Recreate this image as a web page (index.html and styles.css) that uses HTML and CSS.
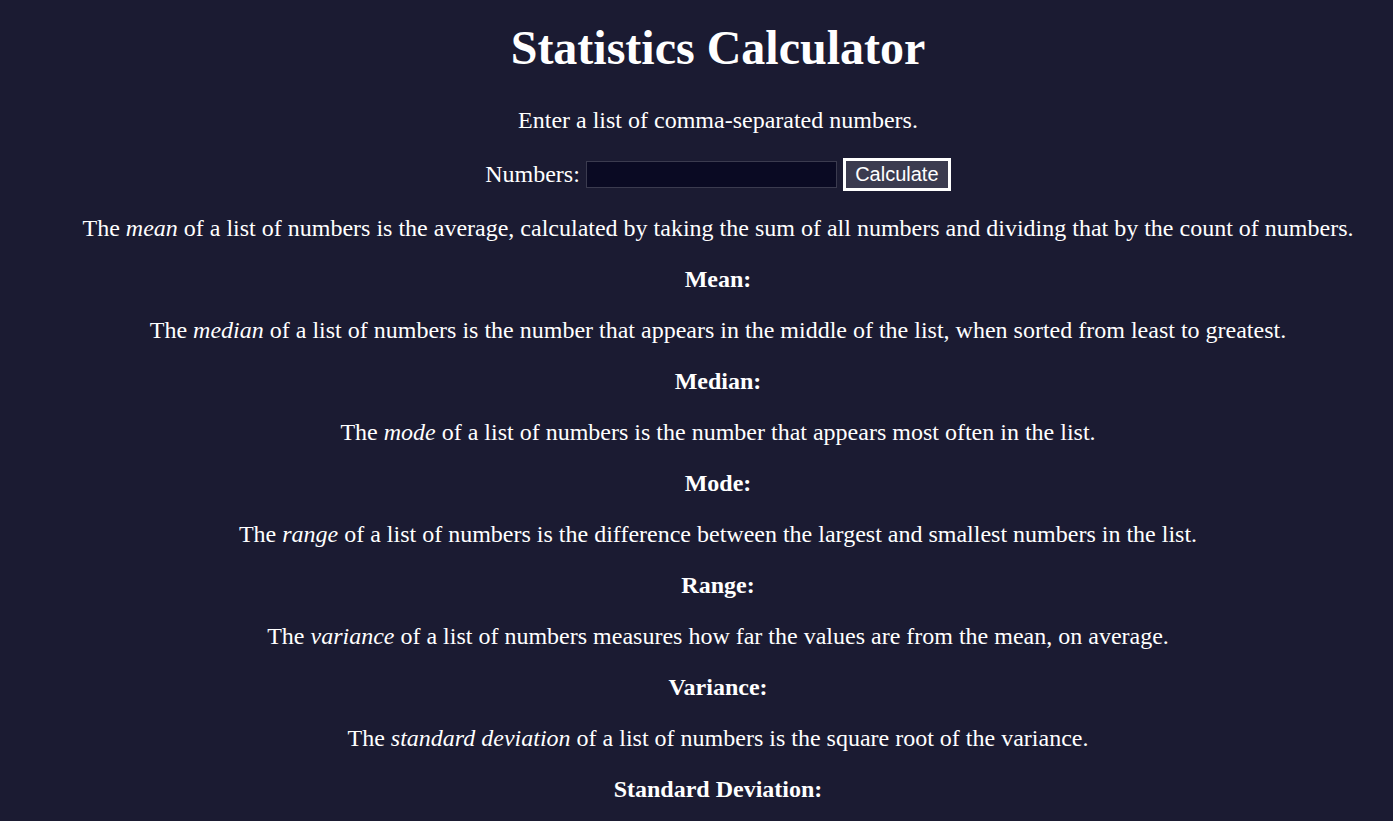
FILE: index.html
```html
<!DOCTYPE html>
<html lang="en">
<head>
<meta charset="utf-8">
<title>Statistics Calculator</title>
<link rel="stylesheet" href="styles.css">
</head>
<body>
<h1 class="title">Statistics Calculator</h1>
<p class="text">Enter a list of comma-separated numbers.</p>
<form class="calc-form" onsubmit="return false;">
  <label class="calc-label" for="numbers">Numbers:</label>
  <input class="calc-input" type="text" name="numbers" id="numbers">
  <button class="calc-button" type="submit">Calculate</button>
</form>
<div class="results">
  <p class="text">The <dfn>mean</dfn> of a list of numbers is the average, calculated by taking the sum of all numbers and dividing that by the count of numbers.</p>
  <p class="text bold">Mean: <span id="mean"></span></p>
  <p class="text">The <dfn>median</dfn> of a list of numbers is the number that appears in the middle of the list, when sorted from least to greatest.</p>
  <p class="text bold">Median: <span id="median"></span></p>
  <p class="text">The <dfn>mode</dfn> of a list of numbers is the number that appears most often in the list.</p>
  <p class="text bold">Mode: <span id="mode"></span></p>
  <p class="text">The <dfn>range</dfn> of a list of numbers is the difference between the largest and smallest numbers in the list.</p>
  <p class="text bold">Range: <span id="range"></span></p>
  <p class="text">The <dfn>variance</dfn> of a list of numbers measures how far the values are from the mean, on average.</p>
  <p class="text bold">Variance: <span id="variance"></span></p>
  <p class="text">The <dfn>standard deviation</dfn> of a list of numbers is the square root of the variance.</p>
  <p class="text bold">Standard Deviation: <span id="standardDeviation"></span></p>
</div>
</body>
</html>
```
FILE: styles.css
```css
html, body {
  margin: 0;
  padding: 0;
}
body {
  background-color: #1b1b32;
  color: #ffffff;
  text-align: center;
  font-family: "Liberation Serif", "Times New Roman", serif;
  font-size: 24px;
  padding-left: 43px;
  padding-top: 2px;
}
.title {
  font-size: 48px;
  font-weight: bold;
  margin: 18px 0 32px;
}
.text {
  margin: 24px 0;
}
.bold {
  font-weight: bold;
}
dfn {
  font-style: italic;
}
.calc-form {
  display: flex;
  justify-content: center;
  align-items: center;
  gap: 6px;
  margin: 0;
}
.calc-label {
  font-size: 24px;
}
.calc-input {
  box-sizing: border-box;
  width: 251px;
  height: 27px;
  background-color: #0a0a23;
  color: #ffffff;
  border: 1px solid #3b3b4f;
  padding: 1px 3px;
  font-family: "Liberation Sans", Arial, sans-serif;
  font-size: 20px;
}
.calc-button {
  box-sizing: border-box;
  height: 33px;
  width: 108px;
  background-color: #3b3b4f;
  border: 3px solid #ffffff;
  color: #ffffff;
  font-family: "Liberation Sans", Arial, sans-serif;
  font-size: 20px;
  padding: 0;
  cursor: pointer;
}
```
